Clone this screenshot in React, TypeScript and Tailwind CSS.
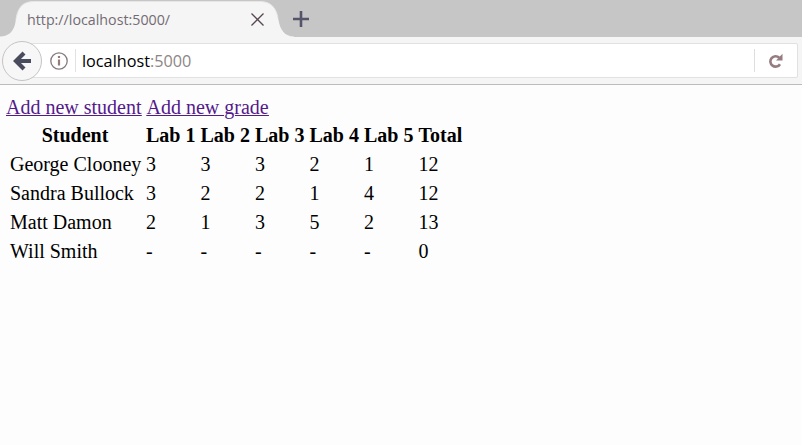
const labs = ['Lab 1', 'Lab 2', 'Lab 3', 'Lab 4', 'Lab 5'];

const students = [
  { name: 'George Clooney', grades: ['3', '3', '3', '2', '1'], total: '12' },
  { name: 'Sandra Bullock', grades: ['3', '2', '2', '1', '4'], total: '12' },
  { name: 'Matt Damon', grades: ['2', '1', '3', '5', '2'], total: '13' },
  { name: 'Will Smith', grades: ['-', '-', '-', '-', '-'], total: '0' },
];

function TabBar() {
  return (
    <div className="relative flex h-[37px] items-center bg-[#c6c6c6]">
      <svg className="absolute left-0 top-0" width="300" height="37" viewBox="0 0 300 37">
        <path
          d="M0 36.500C9 36.500 14 31 15.500 22C17 11 20 1.500 34 1.500H260C273 1.500 277 10 278.500 20C280 30 285 36.500 294 36.500V37H0Z"
          fill="#f5f5f5"
        />
        <path d="M16 19C18 8 22 1.500 34 1.500H260C271 1.500 276 8 278 18" fill="none" stroke="#e6e6e6" />
      </svg>
      <span className="relative ml-[27px] w-[223px] whitespace-nowrap font-['Open_Sans',sans-serif] text-[15px] leading-5 text-[#736b74]">
        <span className="inline-block origin-left scale-x-[0.95]">http://localhost:5000/</span>
      </span>
      <svg className="relative" width="14" height="14" viewBox="0 0 14 14">
        <path d="M1.500 1.500L13.500 13.500M13.500 1.500L1.500 13.500" stroke="#584654" strokeWidth="1.300" fill="none" />
      </svg>
      <svg className="relative ml-[29px]" width="16" height="16" viewBox="0 0 16 16">
        <path d="M8 0V16M0 8H16" stroke="#54546a" strokeWidth="2.600" fill="none" />
      </svg>
    </div>
  );
}

function Toolbar() {
  return (
    <div className="flex h-12 items-center border-b border-[#bcbcbc] bg-[#f5f5f5]">
      <button className="relative z-10 ml-[2px] flex h-10 w-10 shrink-0 items-center justify-center rounded-full border border-[#c4c4c4] bg-[#f7f7f7]">
        <svg width="20" height="20" viewBox="0 0 20 20">
          <path d="M19 10H4M12 2L4 10L12 18" fill="none" stroke="#484c5d" strokeWidth="4.200" />
        </svg>
      </button>
      <div className="-ml-5 flex h-[35px] w-[776px] items-center rounded-[2px] border border-[#e1e1e1] bg-white">
        <svg className="ml-[27px] shrink-0" width="18" height="18" viewBox="0 0 18 18">
          <circle cx="9" cy="9" r="8.200" fill="none" stroke="#857a80" strokeWidth="1.300" />
          <path d="M9 7.500V13.500M9 4V6" stroke="#957b7b" strokeWidth="2.200" />
        </svg>
        <span className="ml-[7px] h-[23px] w-px bg-[#e2e2e2]" />
        <span className="ml-[6px] flex-1 whitespace-nowrap font-['Open_Sans',sans-serif] text-[17px] leading-6 text-[#8d8585]">
          <span className="inline-block origin-left scale-x-[0.954]">
            <span className="text-black">localhost</span>:5000
          </span>
        </span>
        <span className="h-[23px] w-px bg-[#dedede]" />
        <svg className="ml-[14px] mr-[13px]" width="15" height="16" viewBox="0 0 15 16">
          <path d="M10.200 4.700A5.200 5.200 0 1 0 11 11.200" fill="none" stroke="#967c80" strokeWidth="2.600" />
          <path d="M13.500 0.800V7.500H7Z" fill="#967c80" />
        </svg>
      </div>
    </div>
  );
}

export default function App() {
  return (
    <div className="h-[445px] w-[802px] overflow-hidden bg-[#fdfdfd]">
      <TabBar />
      <Toolbar />
      <main className="pl-[6px] pt-[10px] font-['Liberation_Serif',serif] text-[20px] leading-[25px] text-black">
        <nav className="flex h-[26px] gap-[5px] text-[#551a8b] underline decoration-1">
          <a href="#student">Add new student</a>
          <a href="#grade">Add new grade</a>
        </nav>
        <table className="table-fixed border-collapse whitespace-nowrap">
          <colgroup>
            <col className="w-[138px]" />
            {labs.map((lab) => (
              <col key={lab} className="w-[54.500px]" />
            ))}
            <col className="w-[60px]" />
          </colgroup>
          <thead>
            <tr className="h-[29px]">
              <th className="p-0 font-bold">Student</th>
              {labs.map((lab) => (
                <th key={lab} className="p-0 pl-[2px] text-left font-bold">{lab}</th>
              ))}
              <th className="p-0 pl-[2px] text-left font-bold">Total</th>
            </tr>
          </thead>
          <tbody>
            {students.map((student) => (
              <tr key={student.name} className="h-[29px]">
                <td className="p-0 pl-1">{student.name}</td>
                {student.grades.map((grade, index) => (
                  <td key={index} className="p-0 pl-[2px]">{grade}</td>
                ))}
                <td className="p-0 pl-[2px]">{student.total}</td>
              </tr>
            ))}
          </tbody>
        </table>
      </main>
    </div>
  );
}
